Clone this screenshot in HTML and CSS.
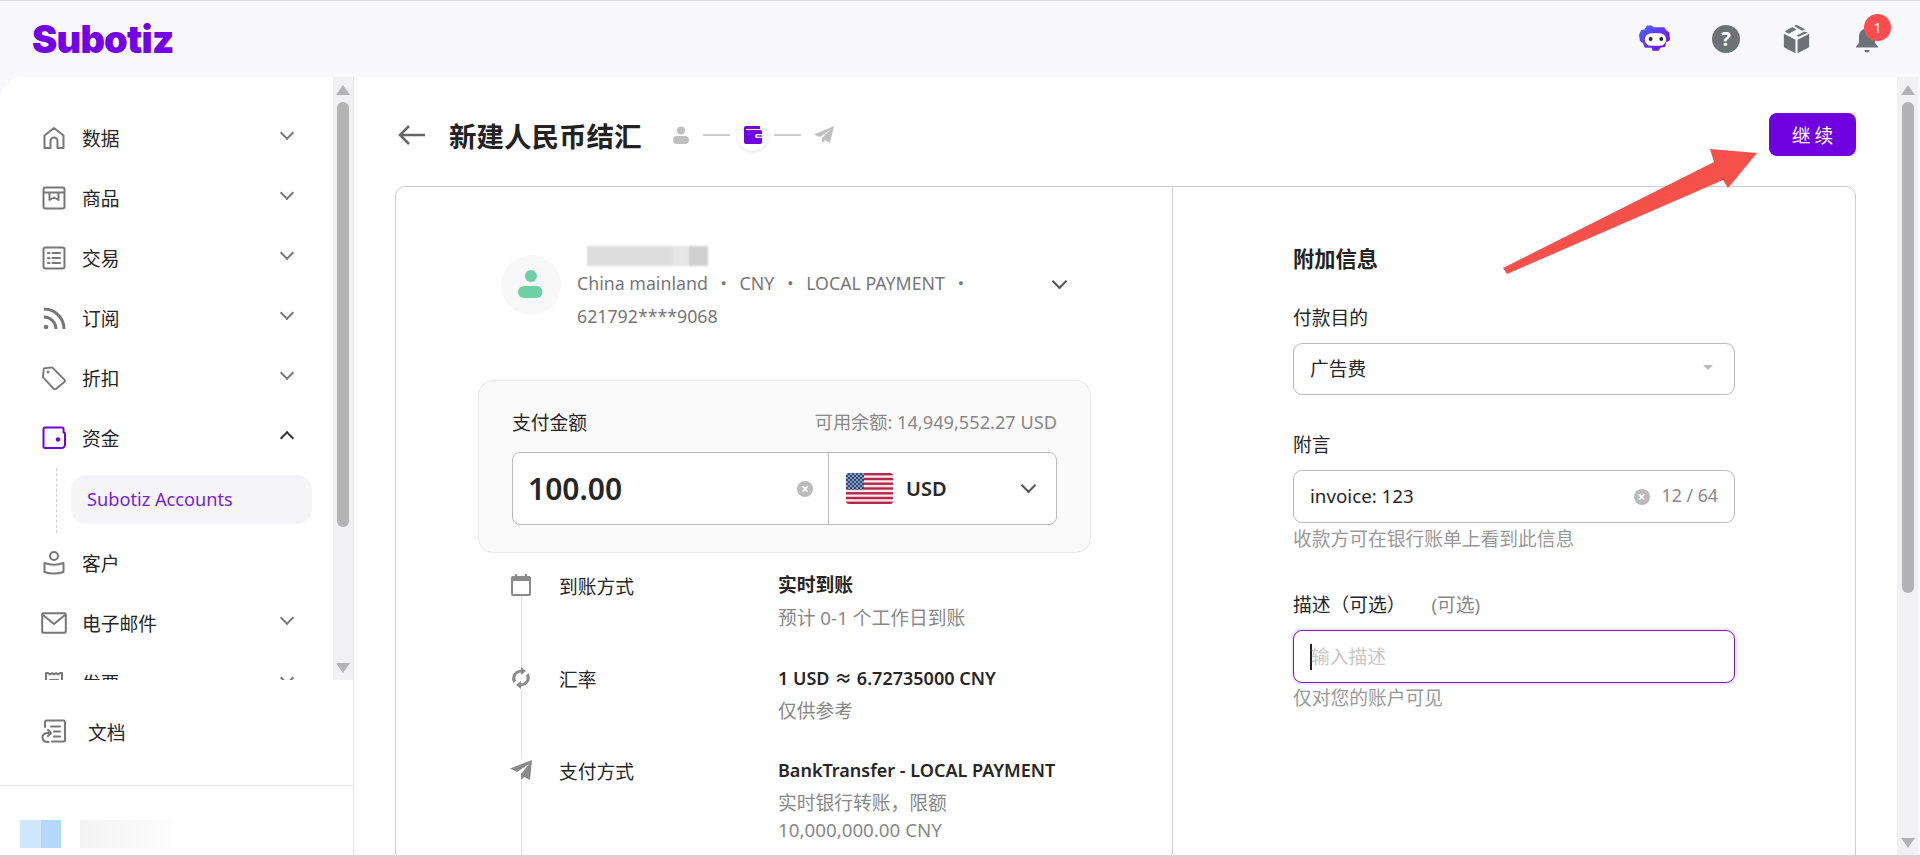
FILE: index.html
```html
<!DOCTYPE html>
<html lang="zh-CN">
<head>
<meta charset="UTF-8" />
<title>新建人民币结汇</title>
<link rel="stylesheet" href="styles.css">
</head>
<body>

<header class="topbar">
  <div class="logo">Subotiz</div>
  <div class="top-icons">
    <svg class="top-icon" viewBox="0 0 34 30">
      <defs>
        <linearGradient id="bot" x1="0" y1="0" x2="1" y2="1">
          <stop offset="0" stop-color="#4a68ff"/>
          <stop offset="1" stop-color="#7a00e6"/>
        </linearGradient>
      </defs>
      <path fill="url(#bot)" d="M8 1h5l2 2h11l2 3 3 2 1 7-1 2-3 1-1 5-5 1-2 3h-6l-1-3H6l-2-5-3-2-1-6 2-5 4-1z"/>
      <rect x="6" y="9" width="22" height="13" rx="6.5" fill="#fff"/>
      <circle cx="12" cy="15" r="2" fill="#222"/>
      <circle cx="23" cy="15" r="2" fill="#222"/>
    </svg>
    <span class="help">?</span>
    <svg class="top-icon" viewBox="0 0 26 28">
      <path fill="#6e7276" d="M12 14.8v12.6L1.2 21.6V9zM14 14.8 24.8 9v12.6L14 27.4zM8 3.4 5.6 4.7 2.2 7 5.6 9 13 5.2 9.4 3zM13 .6 10.8 1.8l7.6 4.4 2.4-1.4zM20 7.2l-7 3.7 2 1.1L23.800 8z"/>
    </svg>
    <div class="bell">
      <svg viewBox="0 0 24 28">
        <path fill="#6e7276" d="M12 1c1.300 0 2 .9 2 2v.5c3.800 1 6 4.200 6 8.500v6l3 3.500v1H1v-1l3-3.500v-6c0-4.300 2.200-7.500 6-8.500V3c0-1.100.7-2 2-2zM9.500 25h5c0 1.500-1 2.500-2.500 2.500S9.500 26.500 9.500 25z"/>
      </svg>
      <span class="badge">1</span>
    </div>
  </div>
</header>

<div class="layout">
  <aside class="sidebar">
    <div class="side-scroll">
      <nav class="side-nav">
        <div class="nav-item">
          <svg class="nav-icon" viewBox="0 0 24 24"><path d="M2.500 22V9.500L12 2l9.500 7.500V22h-6v-7a3.500 3.500 0 0 0-7 0v7z"/></svg>
          <span class="nav-text">数据</span>
          <span class="chev"></span>
        </div>
        <div class="nav-item">
          <svg class="nav-icon" viewBox="0 0 24 24"><rect x="1.500" y="1.500" width="21" height="21" rx="2"/><path d="M2 6.500h20M7.500 6.500V14l4.500-2.500 4.500 2.500V6.500"/></svg>
          <span class="nav-text">商品</span>
          <span class="chev"></span>
        </div>
        <div class="nav-item">
          <svg class="nav-icon" viewBox="0 0 24 24"><rect x="1.500" y="1.500" width="21" height="21" rx="2"/><path d="M6 7h1.500M6 12h1.500M6 17h1.500M10.500 7H18M10.500 12H18M10.500 17H18"/></svg>
          <span class="nav-text">交易</span>
          <span class="chev"></span>
        </div>
        <div class="nav-item">
          <svg class="nav-icon nav-icon-rss" viewBox="0 0 24 24"><path d="M2 3c11 0 20 9 20 20M2 11c6.500 0 12 5.500 12 12"/><circle class="dot" cx="4" cy="21" r="2.300"/></svg>
          <span class="nav-text">订阅</span>
          <span class="chev"></span>
        </div>
        <div class="nav-item">
          <svg class="nav-icon nav-icon-wide" viewBox="0 0 26 26"><path d="M2 2.500 11 1.500 24.500 15a1.500 1.500 0 0 1 0 2L15 25a1.500 1.500 0 0 1-2 0L1 12z"/><circle class="dot" cx="6.500" cy="6.500" r="1.500"/></svg>
          <span class="nav-text">折扣</span>
          <span class="chev"></span>
        </div>
        <div class="nav-item">
          <svg class="nav-icon nav-icon-active" viewBox="0 0 24 24"><path d="M1.500 3A1.500 1.500 0 0 1 3 1.500h17A1.500 1.500 0 0 1 21.500 3v3.500h.5a1 1 0 0 1 1 1v11a3.500 3.500 0 0 1-3.500 3.500H3A1.500 1.500 0 0 1 1.500 21z"/><circle class="dot" cx="16" cy="13.500" r="2.200"/></svg>
          <span class="nav-text">资金</span>
          <span class="chev chev-up"></span>
        </div>
        <div class="sub-nav">
          <div class="sub-item">Subotiz Accounts</div>
        </div>
        <div class="nav-item">
          <svg class="nav-icon" viewBox="0 0 24 24"><circle cx="12" cy="5" r="4"/><path d="M2.500 12c6 2.200 13 2.200 19 0v9c-6 2-13 2-19 0z"/></svg>
          <span class="nav-text">客户</span>
        </div>
        <div class="nav-item">
          <svg class="nav-icon nav-icon-wide" viewBox="0 0 26 22"><rect x="1.200" y="1.200" width="23.600" height="19.600" rx="1.500"/><path d="M2 3l11 9L24 3"/></svg>
          <span class="nav-text">电子邮件</span>
          <span class="chev"></span>
        </div>
        <div class="nav-item">
          <svg class="nav-icon" viewBox="0 0 24 24"><path d="M4 2v20h16V2M4 2h2l2 1.500L10 2l2 1.500L14 2l2 1.500L18 2h2M8 9h8v4H8z"/></svg>
          <span class="nav-text">发票</span>
          <span class="chev"></span>
        </div>
      </nav>
      <div class="scrollbar">
        <span class="arrow-up"></span>
        <span class="thumb side-thumb"></span>
        <span class="arrow-down"></span>
      </div>
    </div>

    <div class="docs">
      <svg class="nav-icon nav-icon-wide" viewBox="0 0 26 24"><path d="M4 8V3a1.500 1.500 0 0 1 1.500-1.500h17A1.500 1.500 0 0 1 24 3v18a1.500 1.500 0 0 1-1.500 1.500H11M10 7.500h9M13 12.500h6M13 17.500h6M7.500 23c-3.500 0-6-1.500-6-4.500S4 14 7 14h2M7 11l3 3-3 3"/></svg>
      <span class="docs-text">文档</span>
    </div>

    <div class="user">
      <span class="user-logo"></span>
      <span class="user-name"></span>
    </div>
  </aside>

  <main class="main">
    <div class="content">
      <div class="page-head">
        <svg class="back" viewBox="0 0 28 22"><path d="M27 11H2M11 2l-9 9 9 9"/></svg>
        <h1>新建人民币结汇</h1>
        <div class="steps">
          <svg class="step-icon" viewBox="0 0 16 18"><circle cx="8" cy="4.500" r="4" /><rect y="10" width="16" height="8" rx="4"/></svg>
          <span class="step-line step-line-first"></span>
          <span class="step-current">
            <svg viewBox="0 0 18 18"><path fill="#6f00e0" d="M2 0h13a1 1 0 0 1 1 1v2H2v1h14a2 2 0 0 1 2 2v2h-5a2 2 0 0 0 0 4h5v4a2 2 0 0 1-2 2H2a2 2 0 0 1-2-2V2a2 2 0 0 1 2-2z"/><rect x="13" y="9.300" width="5" height="1.500" rx=".7" fill="#6f00e0"/></svg>
          </span>
          <span class="step-line step-line-last"></span>
          <svg class="step-icon step-plane" viewBox="0 0 20 18"><path d="M20 0 16 17l-5-3-3 3.500V12L17 3 6 11 0 8.500z"/></svg>
        </div>
        <button class="btn-next">继续</button>
      </div>

      <div class="card">
        <section class="card-left">
          <div class="left-inner">
            <div class="recipient">
              <span class="avatar">
                <svg viewBox="0 0 26 30"><circle cx="13" cy="6" r="6" fill="#6fcfa6"/><rect y="16" width="24.500" height="12" rx="6" fill="#6fcfa6"/></svg>
              </span>
              <div class="recipient-info">
                <div class="blur-name"></div>
                <div class="meta">China mainland<i>・</i>CNY<i>・</i>LOCAL PAYMENT<i>・</i><br>621792****9068</div>
              </div>
              <span class="chev chev-dark"></span>
            </div>

            <div class="amount-box">
              <div class="amount-head">
                <span>支付金额</span>
                <span class="balance">可用余额: 14,949,552.27 USD</span>
              </div>
              <div class="amount-input">
                <div class="amount-value">
                  <span>100.00</span>
                  <span class="clear">×</span>
                </div>
                <div class="currency">
                  <svg class="flag" viewBox="0 0 47 31">
                    <defs>
                      <pattern id="stars" width="4" height="4" patternUnits="userSpaceOnUse">
                        <rect width="4" height="4" fill="#2d4a7c"/>
                        <circle cx="1" cy="1" r=".8" fill="#fff"/>
                        <circle cx="3" cy="3" r=".8" fill="#fff"/>
                      </pattern>
                      <clipPath id="flag-clip"><rect width="47" height="31" rx="3"/></clipPath>
                    </defs>
                    <g clip-path="url(#flag-clip)">
                      <rect width="47" height="31" fill="#fbe9ec"/>
                      <rect y="0" width="47" height="2.400" fill="#b4284a"/>
                      <rect y="4.800" width="47" height="2.400" fill="#b4284a"/>
                      <rect y="9.500" width="47" height="2.400" fill="#b4284a"/>
                      <rect y="14.300" width="47" height="2.400" fill="#b4284a"/>
                      <rect y="19.100" width="47" height="2.400" fill="#b4284a"/>
                      <rect y="23.800" width="47" height="2.400" fill="#b4284a"/>
                      <rect y="28.600" width="47" height="2.400" fill="#b4284a"/>
                      <rect width="18" height="16.500" fill="url(#stars)"/>
                    </g>
                  </svg>
                  <span class="currency-code">USD</span>
                  <span class="chev chev-dark"></span>
                </div>
              </div>
            </div>

            <div class="details">
              <div class="detail">
                <svg class="detail-icon" viewBox="0 0 20 22"><path d="M4 0h2v2h8V0h2v2h2a2 2 0 0 1 2 2v16a2 2 0 0 1-2 2H2a2 2 0 0 1-2-2V4a2 2 0 0 1 2-2h2zM2 7v13h16V7z"/></svg>
                <span class="detail-label">到账方式</span>
                <div>
                  <div class="detail-value detail-bold">实时到账</div>
                  <div class="detail-sub">预计 0-1 个工作日到账</div>
                </div>
              </div>
              <div class="detail">
                <svg class="detail-icon" viewBox="0 0 22 22"><path d="M11 3V0l5 4-5 4V5.500a5.500 5.500 0 0 0-5 8L3.500 16A8.500 8.500 0 0 1 11 3zM11 19v3l-5-4 5-4v2.500a5.500 5.500 0 0 0 5-8L18.500 6A8.500 8.500 0 0 1 11 19z"/></svg>
                <span class="detail-label">汇率</span>
                <div>
                  <div class="detail-value">1 USD ≈ 6.72735000 CNY</div>
                  <div class="detail-sub">仅供参考</div>
                </div>
              </div>
              <div class="detail">
                <svg class="detail-icon" viewBox="0 0 22 20"><path d="M22 0 20 20l-6-3-3 3v-6L19 4 7 12 0 8.500z"/></svg>
                <span class="detail-label">支付方式</span>
                <div>
                  <div class="detail-value">BankTransfer - LOCAL PAYMENT</div>
                  <div class="detail-sub detail-wrap">实时银行转账，限额 10,000,000.00 CNY</div>
                </div>
              </div>
            </div>
          </div>
        </section>

        <section class="card-right">
          <h2>附加信息</h2>

          <label class="field-label">付款目的</label>
          <div class="field field-select">
            <span>广告费</span>
            <span class="caret"></span>
          </div>

          <label class="field-label field-label-gap">附言</label>
          <div class="field">
            <span class="field-text">invoice: 123</span>
            <span class="clear">×</span>
            <span class="counter">12 / 64</span>
          </div>
          <p class="help-text help-text-first">收款方可在银行账单上看到此信息</p>

          <label class="field-label field-label-gap2">描述（可选）<span class="optional">(可选)</span></label>
          <div class="field field-focus">
            <span class="cursor"></span>
            <span class="placeholder">输入描述</span>
          </div>
          <p class="help-text">仅对您的账户可见</p>
        </section>
      </div>
    </div>
    <div class="scrollbar main-scrollbar">
      <span class="arrow-up"></span>
      <span class="thumb main-thumb"></span>
      <span class="arrow-down"></span>
    </div>
  </main>
</div>

<!-- annotation drawn over the screenshot -->
<svg class="annotation" viewBox="0 0 1920 857">
  <polygon fill="#f5504a" points="1503,268 1507,274 1723,180 1728,188 1757,153 1710,149 1714,162"/>
</svg>

</body>
</html>
```

FILE: styles.css
```css
* {
  box-sizing: border-box;
}

html, body {
  height: 100%;
}

body {
  margin: 0;
  height: 857px;
  overflow: hidden;
  display: flex;
  flex-direction: column;
  background: #f9f8fd;
  color: #262626;
  font-family: "Noto Sans", "Noto Sans CJK SC", sans-serif;
  font-size: 18.75px;
  border-top: 1px solid #dcdce4;
  border-bottom: 2px solid #d4d4d4;
}

/* top bar */
.topbar {
  height: 76px;
  flex: none;
  display: flex;
  align-items: center;
  justify-content: space-between;
  padding: 0 33px 0 32px;
}

.logo {
  font-family: "Inter", sans-serif;
  font-weight: 900;
  font-size: 38px;
  letter-spacing: -0.8px;
  color: #7300e6;
}

.top-icons {
  display: flex;
  align-items: center;
  gap: 42px;
}

.top-icon {
  width: 33px;
  height: 30px;
}

.help {
  width: 28px;
  height: 28px;
  border-radius: 50%;
  background: #6e7276;
  color: #fff;
  font-weight: 700;
  font-size: 20px;
  line-height: 28px;
  text-align: center;
  margin: 0 -2px;
}

.bell {
  position: relative;
  width: 24px;
  height: 28px;
  margin-right: 8px;
}

.bell svg {
  width: 24px;
  height: 28px;
  display: block;
}

.badge {
  position: absolute;
  top: -11px;
  left: 9px;
  width: 27px;
  height: 27px;
  border-radius: 50%;
  background: #ff4d4f;
  color: #fff;
  font-size: 15px;
  line-height: 27px;
  text-align: center;
}

.layout {
  flex: 1;
  min-height: 0;
  display: flex;
}

/* sidebar */
.sidebar {
  width: 354px;
  flex: none;
  display: flex;
  flex-direction: column;
  background: #fff;
  border-right: 1px solid #e6e6e6;
  border-top-left-radius: 24px;
}

.side-scroll {
  height: 603px;
  flex: none;
  display: flex;
}

.side-nav {
  flex: 1;
  overflow: hidden;
  padding-top: 31px;
}

.nav-item {
  height: 60px;
  display: flex;
  align-items: center;
  gap: 16px;
  padding: 0 40px 0 42px;
}

.nav-icon {
  width: 24px;
  height: 24px;
  flex: none;
  fill: none;
  stroke: #777;
  stroke-width: 2;
  stroke-linejoin: round;
  stroke-linecap: round;
}

.nav-icon .dot {
  fill: #777;
  stroke: none;
}

.nav-icon-wide {
  width: 26px;
  margin-left: -1px;
  margin-right: -1px;
}

.nav-icon-rss {
  stroke-width: 3;
  stroke-linecap: butt;
}

.nav-icon-active {
  stroke: #6f00e0;
}

.nav-icon-active .dot {
  fill: #6f00e0;
}

.nav-text {
  flex: 1;
  padding-bottom: 2px;
}

.chev {
  width: 10px;
  height: 10px;
  flex: none;
  border-right: 2px solid #777;
  border-bottom: 2px solid #777;
  transform: translateY(-5px) rotate(45deg);
  margin-right: 1px;
}

.chev-up {
  border-color: #333;
  transform: translateY(0) rotate(225deg);
}

.chev-dark {
  width: 11px;
  height: 11px;
  border-color: #555;
  transform: translateY(-3px) rotate(45deg);
}

.sub-nav {
  height: 65px;
  padding: 7px 0 0 14px;
  margin: 0 21px 0 56px;
  position: relative;
  border-left: 1px dashed #ccc;
}

.sub-item {
  height: 49px;
  line-height: 49px;
  padding-left: 16px;
  border-radius: 15px;
  background: #f5f5f7;
  color: #7b1fd1;
  font-size: 18.2px;
}

.scrollbar {
  width: 20px;
  flex: none;
  display: flex;
  flex-direction: column;
  align-items: center;
  background: #f1f1f3;
  padding-top: 8px;
}

.thumb {
  width: 12px;
  border-radius: 6px;
  background: #b3b3b3;
  margin-top: 7px;
}

.side-thumb {
  height: 425px;
}

.arrow-up, .arrow-down {
  width: 0;
  height: 0;
  border-left: 7px solid transparent;
  border-right: 7px solid transparent;
}

.arrow-up {
  border-bottom: 10px solid #b3b3b3;
}

.arrow-down {
  border-top: 10px solid #b3b3b3;
  margin-top: auto;
  margin-bottom: 7px;
}

.docs {
  height: 106px;
  flex: none;
  display: flex;
  align-items: center;
  gap: 22px;
  padding: 0 0 3px 42px;
  border-bottom: 1px solid #e6e6e6;
}

.user {
  flex: 1;
  display: flex;
  align-items: flex-end;
  gap: 19px;
  padding: 0 0 7px 20px;
}

.user-logo {
  width: 41px;
  height: 28px;
  background: linear-gradient(90deg, #cfe6fb 50%, #b5d9fb 50%);
}

.user-name {
  width: 100px;
  height: 28px;
  background: linear-gradient(90deg, #f3f3f3, #fafafa 70%, #fff);
}

/* main area */
.main {
  flex: 1;
  min-width: 0;
  display: flex;
  background: #fff;
  margin-right: 2px;
}

.main-scrollbar {
  width: 21px;
}

.main-thumb {
  height: 491px;
}

.content {
  flex: 1;
  min-width: 0;
  overflow: hidden;
  padding: 36px 41px 0;
}

.page-head {
  height: 43px;
  display: flex;
  align-items: center;
}

.back {
  width: 28px;
  height: 22px;
  margin-left: 3px;
  fill: none;
  stroke: #666;
  stroke-width: 2.500;
}

h1 {
  margin: 0 0 0 23px;
  font-size: 27.5px;
  font-weight: 700;
  color: #222;
}

.steps {
  display: flex;
  align-items: center;
  margin-left: 31px;
}

.step-icon {
  width: 16px;
  height: 18px;
  fill: #bfbfbf;
}

.step-plane {
  width: 20px;
}

.step-line {
  width: 27px;
  height: 2px;
  background: #ccc;
}

.step-line-first {
  margin: 0 7px 0 14px;
}

.step-line-last {
  margin: 0 13px 0 5px;
}

.step-current {
  width: 32px;
  height: 32px;
  border-radius: 50%;
  background: #fff;
  box-shadow: 0 1px 3px rgba(0,0,0,0.12);
  display: flex;
  align-items: center;
  justify-content: center;
}

.step-current svg {
  width: 18px;
  height: 18px;
}

.btn-next {
  margin-left: auto;
  width: 87px;
  height: 43px;
  border: none;
  border-radius: 8px;
  background: #6f00e0;
  color: #fff;
  font-family: inherit;
  font-size: 18.75px;
  letter-spacing: 4px;
  text-indent: 4px;
}

.card {
  margin-top: 30px;
  height: 760px;
  display: flex;
  border: 1px solid #ccc;
  border-radius: 10px;
}

.card-left {
  width: 777px;
  flex: none;
  border-right: 1px solid #ccc;
  padding-left: 1px;
}

.left-inner {
  width: 613px;
  margin: 0 auto;
}

.recipient {
  height: 193px;
  display: flex;
  align-items: flex-start;
  padding: 59px 25px 0 23px;
}

.avatar {
  width: 60px;
  height: 60px;
  flex: none;
  margin-top: 9px;
  border-radius: 50%;
  background: #f8f8f8;
  display: flex;
  align-items: center;
  justify-content: center;
}

.avatar svg {
  width: 26px;
  height: 30px;
}

.recipient-info {
  flex: 1;
  margin-left: 16px;
}

.blur-name {
  width: 121px;
  height: 20px;
  margin-left: 10px;
  background: linear-gradient(90deg, #dcdcdc 70%, #e6e6e6 70%, #e6e6e6 84%, #cfcfcf 84%);
  filter: blur(1px);
}

.meta {
  margin-top: 1px;
  font-size: 17.75px;
  line-height: 33px;
  color: #777;
}

.meta i {
  font-style: normal;
  margin: 0 7px;
}

.recipient .chev-dark {
  margin-top: 33px;
}

.amount-box {
  height: 173px;
  padding: 23px 33px 0 33px;
  border: 1px solid #e8e8e8;
  border-radius: 15px;
  background: #fafafa;
}

.amount-head {
  display: flex;
  justify-content: space-between;
  align-items: center;
  height: 34px;
}

.balance {
  font-size: 18.2px;
  color: #888;
}

.amount-input {
  margin-top: 14px;
  height: 73px;
  display: flex;
  border: 1px solid #bbb;
  border-radius: 8px;
  background: #fff;
}

.amount-value {
  width: 316px;
  flex: none;
  display: flex;
  align-items: center;
  justify-content: space-between;
  padding: 0 15px;
  font-size: 30px;
  font-weight: 600;
  border-right: 1px solid #bbb;
}

.clear {
  width: 16px;
  height: 16px;
  flex: none;
  border-radius: 50%;
  background: #bbb;
  color: #fff;
  font-size: 14px;
  font-weight: 700;
  line-height: 15px;
  text-align: center;
}

.currency {
  flex: 1;
  display: flex;
  align-items: center;
  padding: 0 21px 0 17px;
}

.flag {
  width: 47px;
  height: 31px;
}

.currency-code {
  flex: 1;
  margin-left: 13px;
  font-size: 20px;
  font-weight: 600;
}

.details {
  position: relative;
  padding-top: 16px;
}

.details::before {
  content: "";
  position: absolute;
  left: 43px;
  top: 30px;
  bottom: -40px;
  width: 1px;
  background: #e2e2e2;
}

.detail {
  position: relative;
  height: 92.500px;
  display: grid;
  grid-template-columns: 50px 219px 1fr;
  padding-left: 31px;
}

.detail-icon {
  width: 22px;
  height: 22px;
  margin: 5px 0 0 1px;
  fill: #8a8a8a;
  background: #fff;
}

.detail-label {
  line-height: 36px;
}

.detail-value {
  line-height: 32px;
  font-size: 18px;
  font-weight: 600;
  white-space: nowrap;
}

.detail-bold {
  font-size: 18.75px;
  font-weight: 700;
}

.detail-sub {
  margin-top: 3px;
  line-height: 27px;
  color: #888;
}

.detail-wrap {
  width: 230px;
}

.card-right {
  padding: 56px 0 0 120px;
  width: 563px;
}

h2 {
  margin: 0 0 28px;
  font-size: 21.25px;
  line-height: 32px;
  font-weight: 700;
  color: #222;
}

.field-label {
  display: block;
  line-height: 30px;
  margin-bottom: 10px;
}

.field-label-gap {
  margin-top: 35px;
}

.field-label-gap2 {
  margin-top: 36px;
}

.optional {
  margin-left: 26px;
  color: #888;
}

.field {
  width: 442px;
  height: 53px;
  display: flex;
  align-items: center;
  padding: 0 16px 3px;
  border: 1px solid #bbb;
  border-radius: 9px;
  background: #fff;
}

.field-select {
  height: 52px;
  justify-content: space-between;
  padding-right: 21px;
}

.caret {
  width: 0;
  height: 0;
  border-left: 5px solid transparent;
  border-right: 5px solid transparent;
  border-top: 5px solid #bbb;
}

.field-text {
  flex: 1;
}

.field .clear {
  margin-top: 3px;
}

.counter {
  margin-left: 12px;
  color: #888;
  font-size: 17.75px;
}

.field-focus {
  border: 1.500px solid #6f1fb8;
  box-shadow: 0 0 0 2px #f6e6ff;
}

.cursor {
  width: 2px;
  height: 26px;
  margin: 3px -1px 0 0;
  background: #222;
}

.placeholder {
  color: #c8c8c8;
}

.help-text {
  margin: 0;
  line-height: 30px;
  color: #999;
}

.help-text-first {
  margin-top: 1px;
}

.annotation {
  position: absolute;
  left: 0;
  top: 0;
  width: 1920px;
  height: 857px;
  pointer-events: none;
}
```
